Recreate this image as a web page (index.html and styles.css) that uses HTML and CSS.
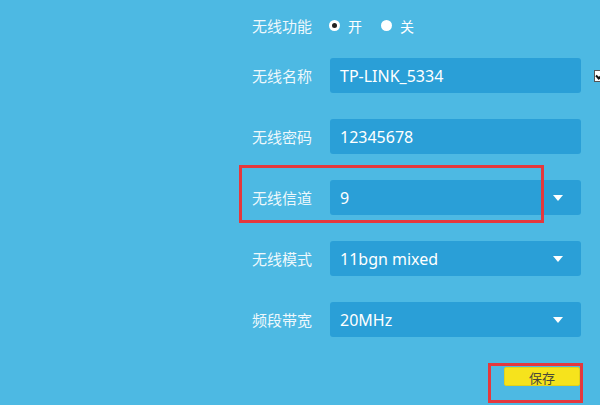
FILE: index.html
```html
<!DOCTYPE html>
<html>

<head>
	<meta http-equiv="Content-Type" content="text/html; charset=UTF-8">
	<title>无线设置</title>
	<link rel="stylesheet" href="styles.css">
</head>

<body>
	<div class="page">
		<div class="form">
			<div class="row row-radio">
				<span class="label">无线功能</span>
				<span class="radio on"></span><span class="opt">开</span>
				<span class="radio"></span><span class="opt">关</span>
			</div>
			<div class="row">
				<span class="label">无线名称</span>
				<div class="field">TP-LINK_5334</div>
				<span class="check"></span>
			</div>
			<div class="row">
				<span class="label">无线密码</span>
				<div class="field">12345678</div>
			</div>
			<div class="row">
				<span class="label">无线信道</span>
				<div class="field select">9<i class="arrow"></i></div>
			</div>
			<div class="row">
				<span class="label">无线模式</span>
				<div class="field select">11bgn mixed<i class="arrow"></i></div>
			</div>
			<div class="row">
				<span class="label">频段带宽</span>
				<div class="field select">20MHz<i class="arrow"></i></div>
			</div>
			<div class="actions">
				<button class="save">保存</button>
			</div>
		</div>

		<!-- 标注框 -->
		<div class="mark mark-channel"></div>
		<div class="mark mark-save"></div>
	</div>
</body>

</html>
```

FILE: styles.css
```css
* {
	margin: 0;
	padding: 0;
	box-sizing: border-box;
}

body {
	background: #4db9e3;
	overflow: hidden;
	font-family: "Noto Sans", "Noto Sans CJK SC", sans-serif;
	color: #fff;
}

.page {
	position: relative;
	width: 600px;
	height: 405px;
}

.form {
	padding: 8px 0 0 252px;
	display: flex;
	flex-direction: column;
	gap: 26px;
}

.row {
	display: flex;
	align-items: center;
	height: 35px;
}

.row-radio {
	margin-bottom: -11px;
}

.label {
	width: 78px;
	flex-shrink: 0;
	font-size: 15px;
	color: #eef8fc;
	font-family: "Noto Sans CJK SC", sans-serif;
}

.radio {
	width: 11px;
	height: 11px;
	border-radius: 50%;
	background: #fff;
	margin-right: 8px;
	margin-left: -1px;
	position: relative;
}

.radio.on::after {
	content: "";
	position: absolute;
	left: 3px;
	top: 3px;
	width: 5px;
	height: 5px;
	border-radius: 50%;
	background: #222;
}

.opt {
	font-size: 14px;
	font-family: "Noto Sans CJK SC", sans-serif;
	margin-right: 20px;
}

.field {
	width: 251px;
	flex-shrink: 0;
	height: 35px;
	background: #2a9fd7;
	border-radius: 3px;
	padding-left: 10px;
	font-size: 16px;
	display: flex;
	align-items: center;
	position: relative;
}

.arrow {
	position: absolute;
	right: 18px;
	top: 15px;
	border-left: 5px solid transparent;
	border-right: 5px solid transparent;
	border-top: 6px solid #fff;
}

.check {
	width: 10px;
	height: 12px;
	flex-shrink: 0;
	margin-left: 13px;
	background: #fff;
	border: 1px solid #555;
	position: relative;
}

.check::after {
	content: "";
	position: absolute;
	left: 1px;
	top: 2px;
	width: 5px;
	height: 3px;
	border-left: 2px solid #111;
	border-bottom: 2px solid #111;
	transform: rotate(-45deg);
}

.actions {
	display: flex;
	justify-content: flex-end;
	width: 328px;
	margin-top: 4px;
}

.save {
	width: 76px;
	height: 19px;
	background: #f6e31c;
	border: 1px solid #e2d21a;
	border-radius: 2px;
	font-family: "Noto Sans CJK SC", sans-serif;
	font-size: 13px;
	color: #4a4a3a;
}

.mark {
	position: absolute;
	border: 3px solid #e5383d;
}

.mark-channel {
	left: 239px;
	top: 165px;
	width: 305px;
	height: 58px;
}

.mark-save {
	left: 488px;
	top: 363px;
	width: 95px;
	height: 40px;
}
```
